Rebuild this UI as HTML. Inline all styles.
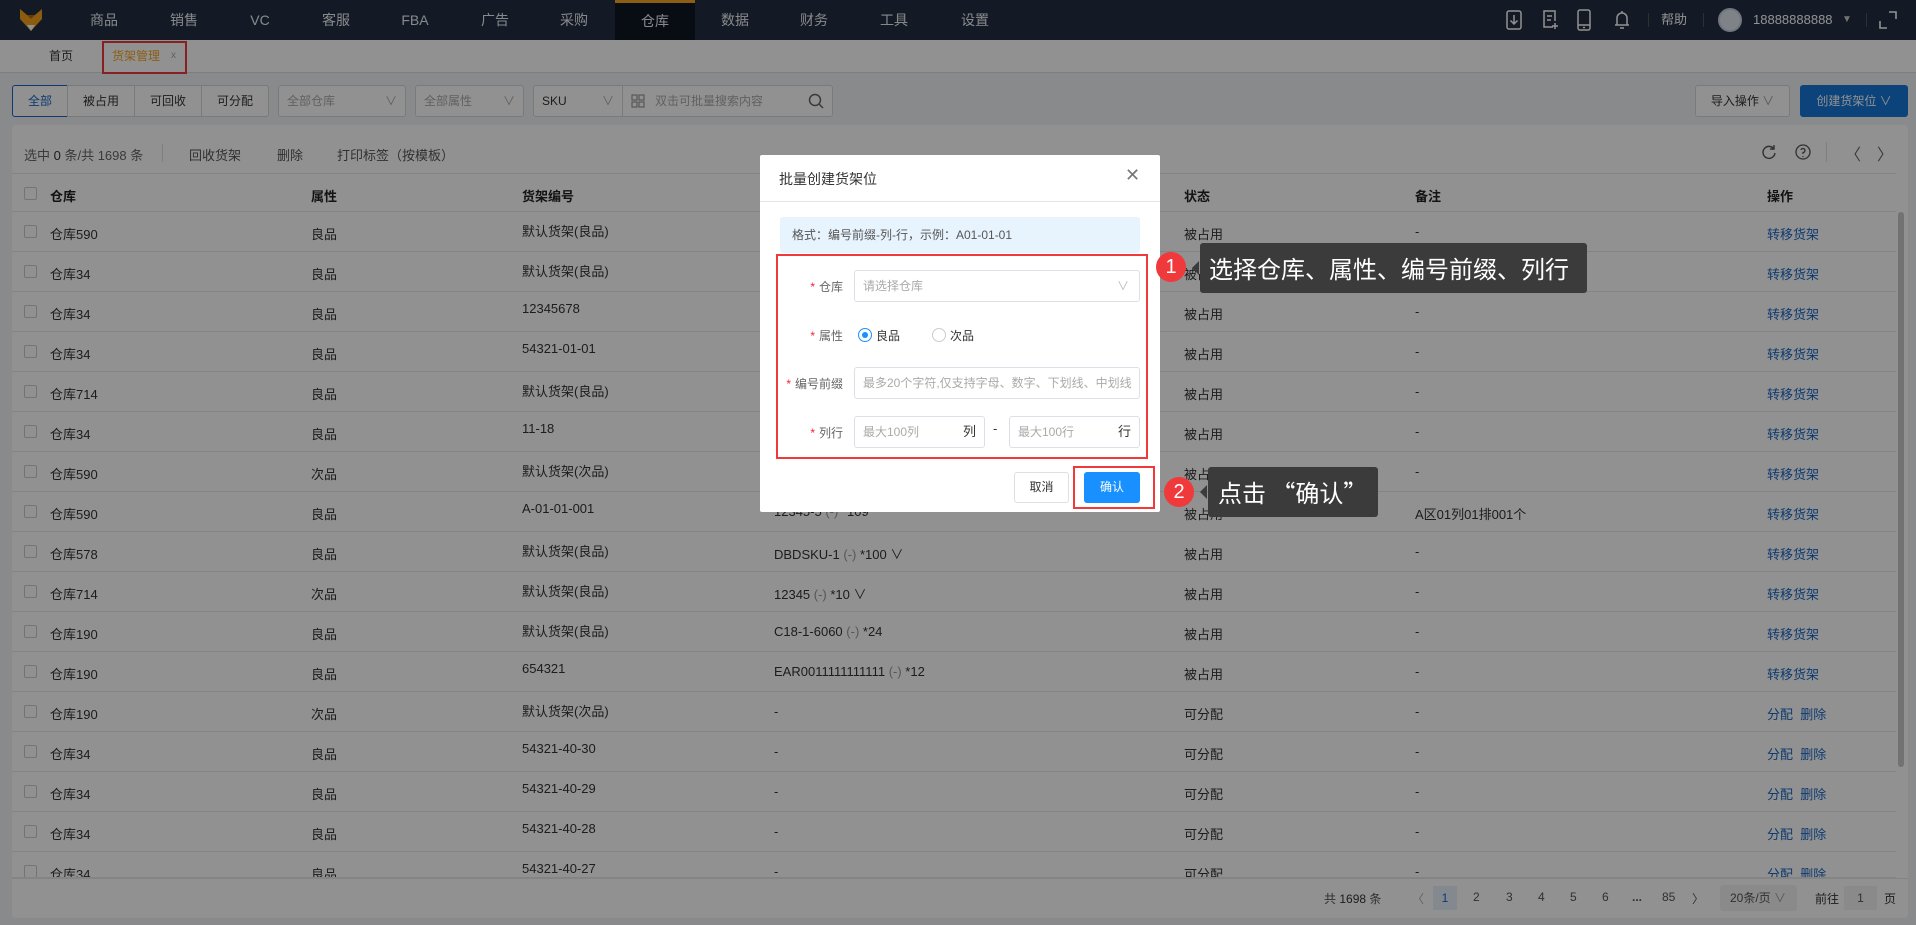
<!DOCTYPE html>
<html><head><meta charset="utf-8"><style>
*{box-sizing:border-box;margin:0;padding:0}
body{width:1916px;height:925px;overflow:hidden;position:relative;background:#f0f2f5;font-family:"Liberation Sans","Noto Sans CJK SC",sans-serif;font-size:13px;color:#333}
.abs{position:absolute}
#hdr{left:0;top:0;width:1916px;height:40px;background:#232f41}
.mi{position:absolute;top:0;height:40px;line-height:40px;width:80px;text-align:center;color:#eef1f5;font-size:14px}
.mi.act{background:#0f1723;border-top:3px solid #f5a623;line-height:36px}
#tabs{left:0;top:40px;width:1916px;height:33px;background:#fff;border-bottom:1px solid #ddd}
.btn{position:absolute;height:32px;line-height:30px;border:1px solid #d6d6d6;background:#fff;text-align:center;font-size:12px;color:#333}
.sel{position:absolute;height:32px;line-height:30px;border:1px solid #d6d6d6;background:#fff;border-radius:3px;font-size:12px;color:#aaa;padding-left:8px}
.sel i{position:absolute;right:8px;top:0;font-style:normal;color:#aaa}
#card{left:12px;top:125px;width:1896px;height:793px;background:#fff;border-radius:4px}
.row{position:absolute;left:12px;width:1884px;height:40px;border-bottom:1px solid #e8e8e8}
.row span{position:absolute;top:12px;white-space:nowrap}
.cb{position:absolute;left:12px;top:13px;width:13px;height:13px;border:1px solid #ccc;border-radius:2px;background:#fff}
.lk{color:#1a66c4}
.g{color:#999}
#ov{left:0;top:0;width:1916px;height:925px;background:rgba(0,0,0,0.43)}
#modal{left:760px;top:155px;width:400px;height:357px;background:#fff;border-radius:2px}
.lab{position:absolute;right:317px;font-size:12px;color:#666;text-align:right;white-space:nowrap}
.lab b{color:#f5222d;font-weight:normal;margin-right:4px}
.inp{position:absolute;height:32px;border:1px solid #dcdfe6;border-radius:3px;font-size:12px;color:#aaa;line-height:30px;padding-left:8px;white-space:nowrap;overflow:hidden}
.tip{position:absolute;background:#3b3b3b;border-radius:3px;color:#fff;font-size:24px;white-space:nowrap;font-family:"Noto Sans CJK SC",sans-serif}
.tip:before{content:"";position:absolute;left:-8px;top:50%;margin-top:-7px;border:7px solid transparent;border-right-color:#3b3b3b;border-left:0}
.num{position:absolute;width:30px;height:30px;border-radius:50%;background:#f0393a;color:#fff;font-size:20px;text-align:center;line-height:30px}
.pg{position:absolute;top:890px;font-size:12px;color:#555}
i.g{font-style:normal;color:#999}
</style></head><body>
<div id="hdr" class="abs">
<svg class="abs" style="left:18px;top:7px" width="26" height="26" viewBox="0 0 26 26"><path d="M2 2 L9 8 H17 L24 2 V12 L13 24 L2 12Z" fill="#f5a21b"/><path d="M9 18 L13 24 L17 18Z" fill="#fff"/><path d="M9 8 H17 L13 12Z" fill="#b86a00"/></svg>
<div class="mi" style="left:64px">商品</div><div class="mi" style="left:144px">销售</div><div class="mi" style="left:220px">VC</div><div class="mi" style="left:296px">客服</div><div class="mi" style="left:375px">FBA</div><div class="mi" style="left:455px">广告</div><div class="mi" style="left:534px">采购</div><div class="mi act" style="left:615px">仓库</div><div class="mi" style="left:695px">数据</div><div class="mi" style="left:774px">财务</div><div class="mi" style="left:854px">工具</div><div class="mi" style="left:935px">设置</div>
<svg class="abs" style="left:1505px;top:10px" width="18" height="20" viewBox="0 0 18 20" fill="none" stroke="#fff" stroke-width="1.5"><rect x="2" y="1" width="14" height="18" rx="2"/><path d="M9 5 V14 M5.5 10.5 L9 14 L12.5 10.5"/></svg>
<svg class="abs" style="left:1541px;top:10px" width="18" height="20" viewBox="0 0 18 20" fill="none" stroke="#fff" stroke-width="1.5"><path d="M12 17 H3 V1 H14 V11"/><path d="M6 6 H11 M6 10 H10 M14 13 V19 M11 16 H17"/></svg>
<svg class="abs" style="left:1576px;top:9px" width="16" height="22" viewBox="0 0 16 22" fill="none" stroke="#fff" stroke-width="1.5"><rect x="2" y="1" width="12" height="20" rx="2"/><path d="M2 16 H14 M7 18.5 H9"/></svg>
<svg class="abs" style="left:1613px;top:9px" width="18" height="22" viewBox="0 0 18 22" fill="none" stroke="#fff" stroke-width="1.5"><path d="M4 16 V9 A5 5 0 0 1 14 9 V16 H16 H2 Z M9 2 V4 M7 19 H11"/></svg>
<div class="abs" style="left:1648px;top:13px;width:1px;height:14px;background:#555"></div>
<div class="abs" style="left:1661px;top:0;line-height:40px;color:#fff;font-size:13px">帮助</div>
<div class="abs" style="left:1703px;top:13px;width:1px;height:14px;background:#555"></div>
<div class="abs" style="left:1718px;top:8px;width:24px;height:24px;border-radius:50%;background:#dfe6ef;border:2px solid #c3d0e0"></div>
<div class="abs" style="left:1753px;top:0;line-height:40px;color:#fff;font-size:13px">18888888888</div>
<div class="abs" style="left:1842px;top:0;line-height:40px;color:#ccc;font-size:10px">▼</div>
<div class="abs" style="left:1866px;top:13px;width:1px;height:14px;background:#555"></div>
<svg class="abs" style="left:1879px;top:11px" width="18" height="18" viewBox="0 0 18 18" fill="none" stroke="#fff" stroke-width="1.6"><path d="M10 1 H17 V8 M1 10 V17 H8"/></svg>
</div>
<div id="tabs" class="abs">
<div class="abs" style="left:49px;top:0;line-height:32px;font-size:12px;color:#333">首页</div>
<div class="abs" style="left:112px;top:0;line-height:32px;font-size:12px;color:#f5a623">货架管理</div>
<div class="abs" style="left:171px;top:0;line-height:32px;font-size:10px;color:#aaa">x</div>
</div>
<div class="abs" style="left:102px;top:41px;width:85px;height:33px;border:2px solid #f0393a"></div>
<div class="btn" style="left:12px;top:85px;width:56px;border-color:#1a66c4;color:#1a66c4;border-radius:3px 0 0 3px">全部</div>
<div class="btn" style="left:67px;top:85px;width:68px">被占用</div>
<div class="btn" style="left:134px;top:85px;width:68px">可回收</div>
<div class="btn" style="left:201px;top:85px;width:68px;border-radius:0 3px 3px 0">可分配</div>
<div class="sel" style="left:278px;top:85px;width:128px">全部仓库<i>∨</i></div>
<div class="sel" style="left:415px;top:85px;width:109px">全部属性<i>∨</i></div>
<div class="sel" style="left:533px;top:85px;width:90px;color:#333;border-radius:3px 0 0 3px">SKU<i>∨</i></div>
<div class="sel" style="left:622px;top:85px;width:211px;border-radius:0 3px 3px 0;padding-left:32px">双击可批量搜索内容</div>
<svg class="abs" style="left:631px;top:94px" width="14" height="14" viewBox="0 0 14 14" fill="none" stroke="#999" stroke-width="1.2"><rect x="1" y="1" width="5" height="5"/><rect x="8" y="1" width="5" height="5"/><rect x="1" y="8" width="5" height="5"/><rect x="8" y="8" width="5" height="5"/></svg>
<svg class="abs" style="left:808px;top:93px" width="16" height="16" viewBox="0 0 16 16" fill="none" stroke="#666" stroke-width="1.5"><circle cx="7" cy="7" r="5.5"/><path d="M11 11 L15 15"/></svg>
<div class="btn" style="left:1695px;top:85px;width:95px;border-radius:3px">导入操作 <span style="color:#999">∨</span></div>
<div class="btn" style="left:1800px;top:85px;width:108px;border-color:#1677d9;background:#1677d9;color:#fff;border-radius:3px">创建货架位 ∨</div>
<div id="card" class="abs"></div>
<div class="abs" style="left:24px;top:145px;font-size:13px;color:#666">选中 <b style="color:#333;font-weight:normal">0</b> 条/共 1698 条</div>
<div class="abs" style="left:162px;top:144px;width:1px;height:18px;background:#ddd"></div>
<div class="abs" style="left:189px;top:145px;color:#555">回收货架</div>
<div class="abs" style="left:277px;top:145px;color:#555">删除</div>
<div class="abs" style="left:337px;top:145px;color:#555">打印标签（按模板）</div>
<svg class="abs" style="left:1761px;top:144px" width="16" height="16" viewBox="0 0 16 16" fill="none" stroke="#555" stroke-width="1.4"><path d="M13 5 A6 6 0 1 0 14 9 M13 1 V5 H9"/></svg>
<svg class="abs" style="left:1795px;top:144px" width="16" height="16" viewBox="0 0 16 16" fill="none" stroke="#555" stroke-width="1.3"><circle cx="8" cy="8" r="7"/><path d="M6 6 A2 2 0 1 1 8 8.5 V10 M8 12 V13"/></svg>
<div class="abs" style="left:1826px;top:142px;width:1px;height:20px;background:#ddd"></div>
<div class="abs" style="left:1845px;top:141px;font-size:16px;color:#666">〈</div>
<div class="abs" style="left:1877px;top:141px;font-size:16px;color:#666">〉</div>
<div id="tbl">
<div class="row" style="top:173px;height:39px;border-top:1px solid #e8e8e8"><div class="cb"></div><span style="left:38px;font-weight:bold;color:#222">仓库</span><span style="left:299px;font-weight:bold;color:#222">属性</span><span style="left:510px;font-weight:bold;color:#222">货架编号</span><span style="left:1172px;font-weight:bold;color:#222">状态</span><span style="left:1403px;font-weight:bold;color:#222">备注</span><span style="left:1755px;font-weight:bold;color:#222">操作</span></div>
</div>
<div class="abs" style="left:1898px;top:212px;width:6px;height:555px;background:#c8c8c8;border-radius:3px"></div>
<div class="abs" style="left:12px;top:878px;width:1896px;height:1px;background:#e8e8e8"></div>
<div class="pg" style="left:1324px">共 <span style="color:#333">1698</span> 条</div>
<div class="pg" style="left:1412px;color:#aaa">〈</div>
<div class="abs" style="left:1433px;top:886px;width:24px;height:24px;background:#e8f0fb;color:#1a66c4;text-align:center;line-height:24px;font-size:12px">1</div>
<div class="pg" style="left:1473px">2</div><div class="pg" style="left:1506px">3</div><div class="pg" style="left:1538px">4</div><div class="pg" style="left:1570px">5</div><div class="pg" style="left:1602px">6</div><div class="pg" style="left:1632px;font-weight:bold">...</div><div class="pg" style="left:1662px">85</div><div class="pg" style="left:1692px">〉</div>
<div class="abs" style="left:1720px;top:885px;width:77px;height:26px;background:#f3f3f3;border-radius:3px;font-size:12px;line-height:26px;padding-left:10px;color:#555">20条/页 <span style="color:#999">∨</span></div>
<div class="pg" style="left:1815px;color:#333">前往</div>
<div class="abs" style="left:1844px;top:886px;width:33px;height:24px;background:#f3f3f3;text-align:center;line-height:24px;font-size:12px;color:#555">1</div>
<div class="pg" style="left:1884px;color:#333">页</div>
<script>
var R=[["仓库590","良品","默认货架(良品)","","被占用","-",1],["仓库34","良品","默认货架(良品)","","被占用","-",1],["仓库34","良品","12345678","","被占用","-",1],["仓库34","良品","54321-01-01","","被占用","-",1],["仓库714","良品","默认货架(良品)","","被占用","-",1],["仓库34","良品","11-18","","被占用","-",1],["仓库590","次品","默认货架(次品)","","被占用","-",1],["仓库590","良品","A-01-01-001","12345-5 <i class=g>(-)</i> *109","被占用","A区01列01排001个",1],["仓库578","良品","默认货架(良品)","DBDSKU-1 <i class=g>(-)</i> *100 ∨","被占用","-",1],["仓库714","次品","默认货架(良品)","12345 <i class=g>(-)</i> *10 ∨","被占用","-",1],["仓库190","良品","默认货架(良品)","C18-1-6060 <i class=g>(-)</i> *24","被占用","-",1],["仓库190","良品","654321","EAR0011111111111 <i class=g>(-)</i> *12","被占用","-",1],["仓库190","次品","默认货架(次品)","-","可分配","-",0],["仓库34","良品","54321-40-30","-","可分配","-",0],["仓库34","良品","54321-40-29","-","可分配","-",0],["仓库34","良品","54321-40-28","-","可分配","-",0],["仓库34","良品","54321-40-27","-","可分配","-",0]];
var h="";R.forEach(function(r,i){var t=212+i*40;if(t>870)return;var ht=Math.min(40,878-t);h+='<div class="row" style="top:'+t+'px;height:'+ht+'px;overflow:hidden"><div class="cb"></div><span style="left:38px">'+r[0]+'</span><span style="left:299px">'+r[1]+'</span><span style="left:510px;top:9px">'+r[2]+'</span><span style="left:762px;font-style:normal">'+r[3]+'</span><span style="left:1172px">'+r[4]+'</span><span style="left:1403px">'+r[5]+'</span><span class="lk" style="left:1755px">'+(r[6]?'转移货架':'分配&nbsp;&nbsp;删除')+'</span></div>'});
document.getElementById("tbl").innerHTML+=h;
</script>
<div id="ov" class="abs"></div>
<div id="modal" class="abs">
<div class="abs" style="left:19px;top:14px;font-size:14px;color:#333">批量创建货架位</div>
<div class="abs" style="left:365px;top:10px;font-size:18px;color:#777">✕</div>
<div class="abs" style="left:0;top:46px;width:400px;height:1px;background:#e4e4e4"></div>
<div class="abs" style="left:20px;top:62px;width:360px;height:36px;background:#e8f4fd;border-radius:3px;font-size:12px;color:#555;line-height:36px;padding-left:12px">格式：编号前缀-列-行，示例：A01-01-01</div>
<div class="abs" style="left:16px;top:99px;width:372px;height:205px;border:2px solid #f0393a"></div>
<div class="lab" style="top:123px"><b>*</b>仓库</div>
<div class="inp" style="left:94px;top:115px;width:286px">请选择仓库<span style="position:absolute;right:10px;color:#bbb">∨</span></div>
<div class="lab" style="top:172px"><b>*</b>属性</div>
<div class="abs" style="left:98px;top:173px;width:14px;height:14px;border-radius:50%;border:1px solid #1890ff"><div class="abs" style="left:3px;top:3px;width:6px;height:6px;border-radius:50%;background:#1890ff"></div></div>
<div class="abs" style="left:116px;top:172px;font-size:12px;color:#333">良品</div>
<div class="abs" style="left:172px;top:173px;width:14px;height:14px;border-radius:50%;border:1px solid #ccc"></div>
<div class="abs" style="left:190px;top:172px;font-size:12px;color:#333">次品</div>
<div class="lab" style="top:220px"><b>*</b>编号前缀</div>
<div class="inp" style="left:94px;top:212px;width:286px">最多20个字符,仅支持字母、数字、下划线、中划线</div>
<div class="lab" style="top:269px"><b>*</b>列行</div>
<div class="inp" style="left:94px;top:261px;width:131px">最大100列<span style="position:absolute;right:8px;color:#333;font-size:13px">列</span></div>
<div class="abs" style="left:233px;top:266px;color:#333">-</div>
<div class="inp" style="left:249px;top:261px;width:131px">最大100行<span style="position:absolute;right:8px;color:#333;font-size:13px">行</span></div>
<div class="abs" style="left:254px;top:317px;width:55px;height:31px;border:1px solid #dcdfe6;border-radius:3px;text-align:center;line-height:29px;font-size:12px;color:#333">取消</div>
<div class="abs" style="left:324px;top:317px;width:56px;height:31px;background:#1890ff;border-radius:3px;text-align:center;line-height:31px;font-size:12px;color:#fff">确认</div>
<div class="abs" style="left:313px;top:311px;width:82px;height:43px;border:2px solid #f0393a"></div>
</div>
<div class="num" style="left:1156px;top:252px">1</div>
<div class="tip" style="left:1200px;top:243px;width:387px;height:50px;line-height:50px;padding-left:9px">选择仓库、属性、编号前缀、列行</div>
<div class="num" style="left:1164px;top:477px">2</div>
<div class="tip" style="left:1208px;top:467px;width:170px;height:50px;line-height:50px;padding-left:10px">点击 “确认”</div>
</body></html>
